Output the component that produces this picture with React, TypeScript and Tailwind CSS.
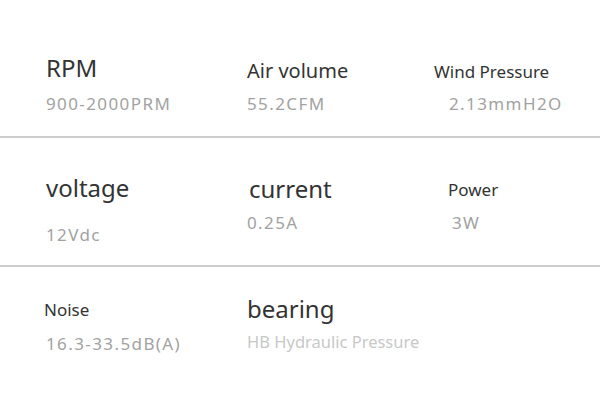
import React from 'react';

const label = "text-[24px] leading-[28px] text-[#333333]";
const small = "text-[17px] leading-[20px] text-[#333333]";
const value = "text-[17px] leading-[20px] text-[#a2a2a2] tracking-[1.4px]";

const App = () => {
  return (
    <div className="w-[600px] h-[404px] bg-white overflow-hidden" style={{ fontFamily: '"Noto Sans", "Open Sans", sans-serif' }}>
      {/* row 1 */}
      <div className="h-[138px] border-b-2 border-[#cdcdcd] grid grid-cols-[201px_187px_1fr] pl-[46px]">
        <div className="pt-[54px]">
          <div className={label}>RPM</div>
          <div className={`${value} mt-[12px]`}>900-2000PRM</div>
        </div>
        <div className="pt-[57px]">
          <div className="text-[20px] leading-[28px] text-[#333333]">Air volume</div>
          <div className={`${value} mt-[9px]`}>55.2CFM</div>
        </div>
        <div className="pt-[62px]">
          <div className={small}>Wind Pressure</div>
          <div className={`${value} mt-[12px] ml-[15px]`}>2.13mmH2O</div>
        </div>
      </div>

      {/* row 2 */}
      <div className="h-[129px] border-b-2 border-[#cdcdcd] grid grid-cols-[201px_201px_1fr] pl-[46px]">
        <div className="pt-[36px]">
          <div className={label}>voltage</div>
          <div className={`${value} mt-[23px]`}>12Vdc</div>
        </div>
        <div className="pt-[37px]">
          <div className={`${label} ml-[2px]`}>current</div>
          <div className={`${value} mt-[10px]`}>0.25A</div>
        </div>
        <div className="pt-[42px]">
          <div className={small}>Power</div>
          <div className={`${value} mt-[13px] ml-[4px]`}>3W</div>
        </div>
      </div>

      {/* row 3 */}
      <div className="grid grid-cols-[201px_1fr] pl-[46px]">
        <div className="pt-[33px]">
          <div className={`${small} -ml-[2px]`}>Noise</div>
          <div className={`${value} mt-[14px]`}>16.3-33.5dB(A)</div>
        </div>
        <div className="pt-[28px]">
          <div className={label}>bearing</div>
          <div className="text-[16.5px] leading-[18px] text-[#c8c8c8] mt-[10px]">HB Hydraulic Pressure</div>
        </div>
      </div>
    </div>
  );
};

export default App;
